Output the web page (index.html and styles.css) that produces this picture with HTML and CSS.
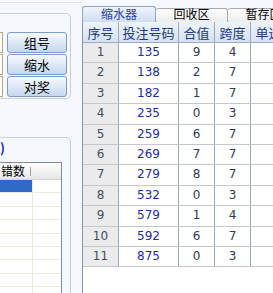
FILE: index.html
```html
<!DOCTYPE html>
<html lang="zh-CN">
<head>
  <meta charset="UTF-8">
  <title>缩水器</title>
  <link rel="stylesheet" href="styles.css">
</head>
<body>
  <div class="app">
    <div class="side">
      <div class="side-top"></div>
      <div class="group group-ops">
        <div class="op-row"><span class="stub"></span><button class="op-btn">组号</button></div>
        <div class="op-row"><span class="stub"></span><button class="op-btn">缩水</button></div>
        <div class="op-row"><span class="stub"></span><button class="op-btn">对奖</button></div>
      </div>
      <div class="group group-list">
        <div class="group-title">)</div>
        <div class="list">
          <div class="list-head"><span class="list-col">错数</span><span class="list-sep"></span></div>
          <div id="listRows"></div>
        </div>
      </div>
    </div>

    <div class="main">
      <div class="tabs">
        <div class="tab active">缩水器</div>
        <div class="tab">回收区</div>
        <div class="tab">暂存区</div>
      </div>
      <div class="grid">
        <div class="grid-row grid-head">
          <div class="cell">序号</div>
          <div class="cell">投注号码</div>
          <div class="cell">合值</div>
          <div class="cell">跨度</div>
          <div class="cell">单选</div>
        </div>
        <div id="rows"></div>
      </div>
    </div>
  </div>

  <script>
    const data = [
      [135, 9, 4], [138, 2, 7], [182, 1, 7], [235, 0, 3],
      [259, 6, 7], [269, 7, 7], [279, 8, 7], [532, 0, 3],
      [579, 1, 4], [592, 6, 7], [875, 0, 3]
    ];
    const rows = document.getElementById('rows');
    data.forEach((d, i) => {
      const row = document.createElement('div');
      row.className = 'grid-row';
      row.innerHTML =
        '<div class="cell idx">' + (i + 1) + '</div>' +
        '<div class="cell num">' + d[0] + '</div>' +
        '<div class="cell val">' + d[1] + '</div>' +
        '<div class="cell val">' + d[2] + '</div>' +
        '<div class="cell"></div>';
      rows.appendChild(row);
    });

    const listRows = document.getElementById('listRows');
    for (let i = 0; i < 10; i++) {
      const row = document.createElement('div');
      row.className = 'list-row' + (i === 0 ? ' sel' : '');
      row.innerHTML = '<span class="list-cell"></span><span class="list-cell"></span>';
      listRows.appendChild(row);
    }
  </script>
</body>
</html>
```

FILE: styles.css
```css
body { margin: 0; background: #f5f8fc; font-family: "Noto Sans CJK SC", "DejaVu Sans", sans-serif; font-size: 12px; }
.app { display: flex; height: 293px; overflow: hidden; }

/* left side */
.side { width: 82px; flex: none; overflow: hidden; }
.side-top { height: 2px; border-bottom: 1px solid #dde2e9; }
.group { box-sizing: border-box; width: 81px; margin-left: -10px; border: 1px solid #c8d0db; border-radius: 5px; }
.group-ops { height: 86px; margin-top: 10px; padding-top: 18px; }
.op-row { display: flex; align-items: center; height: 21px; margin-bottom: 1px; }
.stub { box-sizing: border-box; width: 12px; height: 21px; margin-right: 4px; border: 1px solid #b8a486; border-left: none; background: #fff; }
.op-btn { box-sizing: border-box; width: 60px; height: 21px; padding: 0; border: 1px solid #7d9dc5; border-radius: 3px; background: linear-gradient(#f6f9fe, #c6d7ee); font-family: inherit; font-size: 13px; line-height: 18px; color: #000; }

.group-list { height: 170px; margin-top: 38px; padding-top: 3px; }
.group-title { height: 13px; padding-left: 9px; line-height: 13px; font-size: 13px; font-weight: bold; color: #1a2ea6; }
.list { box-sizing: border-box; width: 71px; margin-top: 8px; border: 1px solid #7f8a9b; border-left: none; background: #fff; }
.list-head { display: flex; align-items: center; height: 16px; background: linear-gradient(#ffffff, #e6e6e6); border-bottom: 1px solid #d6d6d6; }
.list-col { width: 34px; text-align: right; padding-right: 4px; line-height: 16px; font-size: 12px; color: #000; }
.list-sep { width: 1px; height: 9px; margin-left: 1px; background: #a0a0a0; }
.list-row { display: flex; height: 12.4px; border-bottom: 1px solid #eeead9; }
.list-cell { width: 41px; border-right: 1px solid #eeead9; }
.list-cell + .list-cell { flex: 1; border-right: none; }
.list-row.sel .list-cell:first-child { background: #3169c6; }

/* main grid */
.main { flex: 1; min-width: 0; overflow: hidden; background: #fff; }
.tabs { display: flex; align-items: flex-end; height: 22px; background: #f5f8fc; }
.tab { box-sizing: border-box; flex: none; width: 72px; height: 14px; border: 1px solid #a9a9a9; border-bottom: none; border-left: none; border-radius: 3px 3px 0 0; background: linear-gradient(#ffffff, #ececec); text-align: center; line-height: 10px; font-size: 12px; color: #000; white-space: nowrap; }
.tab.active { width: 74px; height: 16px; border-left: 1px solid #8ea5c8; border-color: #8ea5c8; background: linear-gradient(#f0f5fc, #cfdcf1); color: #2840b0; line-height: 14px; }

.grid { width: 260px; min-height: 271px; border-left: 1px solid #8796ad; background: #fff; }
.grid-row { display: grid; grid-template-columns: 36px 60px 36px 36px 36px 1fr; height: 20.4px; border-bottom: 1px solid #c3c8d0; box-sizing: border-box; }
.grid-head { height: 21px; background: linear-gradient(#eef3fa, #d5e1f2); border-bottom: 1px solid #9fadc2; }
.cell { border-right: 1px solid #9ea8b7; text-align: center; line-height: 19px; font-family: "DejaVu Sans", sans-serif; font-size: 12px; color: #2e3b52; }
.grid-head .cell { font-family: "Noto Sans CJK SC", sans-serif; font-size: 13px; line-height: 21px; color: #1f3a78; white-space: nowrap; overflow: hidden; }
.cell.idx { background: #ebebeb; color: #3b4e62; }
.cell.num { color: #1f2d9e; }
```
